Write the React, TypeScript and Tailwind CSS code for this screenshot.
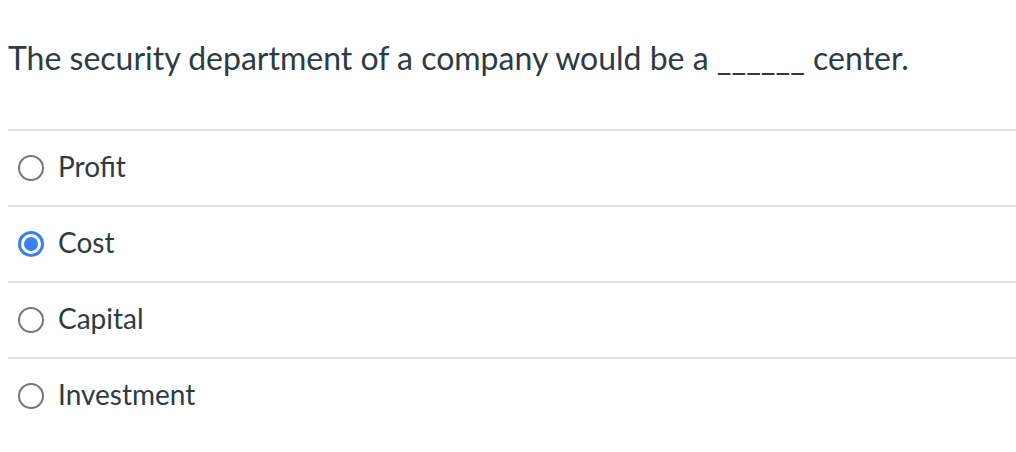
import React, { useState } from 'react';

const options = ['Profit', 'Cost', 'Capital', 'Investment'];

const App = () => {
  const [selected, setSelected] = useState('Cost');

  return (
    <div className="w-[1016px] h-[452px] bg-white pl-2 text-[#2d3b45]" style={{ fontFamily: 'Lato, "Open Sans", sans-serif' }}>
      <div className="pt-[39px] h-[129px] text-[32px] leading-[38px]">
        The security department of a company would be a ______ center.
      </div>

      <div>
        {options.map((opt) => {
          const isSel = selected === opt;
          return (
            <label
              key={opt}
              className="flex items-center h-[76px] border-t-2 border-[#dcdfe2] cursor-pointer"
              onClick={() => setSelected(opt)}
            >
              <span className="w-[46px] pl-[10px] flex">
                {isSel ? (
                  <span className="w-[26px] h-[26px] rounded-full border-[3px] border-[#3b7ff3] flex items-center justify-center">
                    <span className="w-[14px] h-[14px] rounded-full bg-[#3b7ff3]" />
                  </span>
                ) : (
                  <span className="w-[26px] h-[26px] rounded-full border-2 border-[#767676]" />
                )}
              </span>
              <span className="ml-[4px] text-[28px] leading-[32px] -mt-1">{opt}</span>
            </label>
          );
        })}
      </div>
    </div>
  );
};

export default App;
